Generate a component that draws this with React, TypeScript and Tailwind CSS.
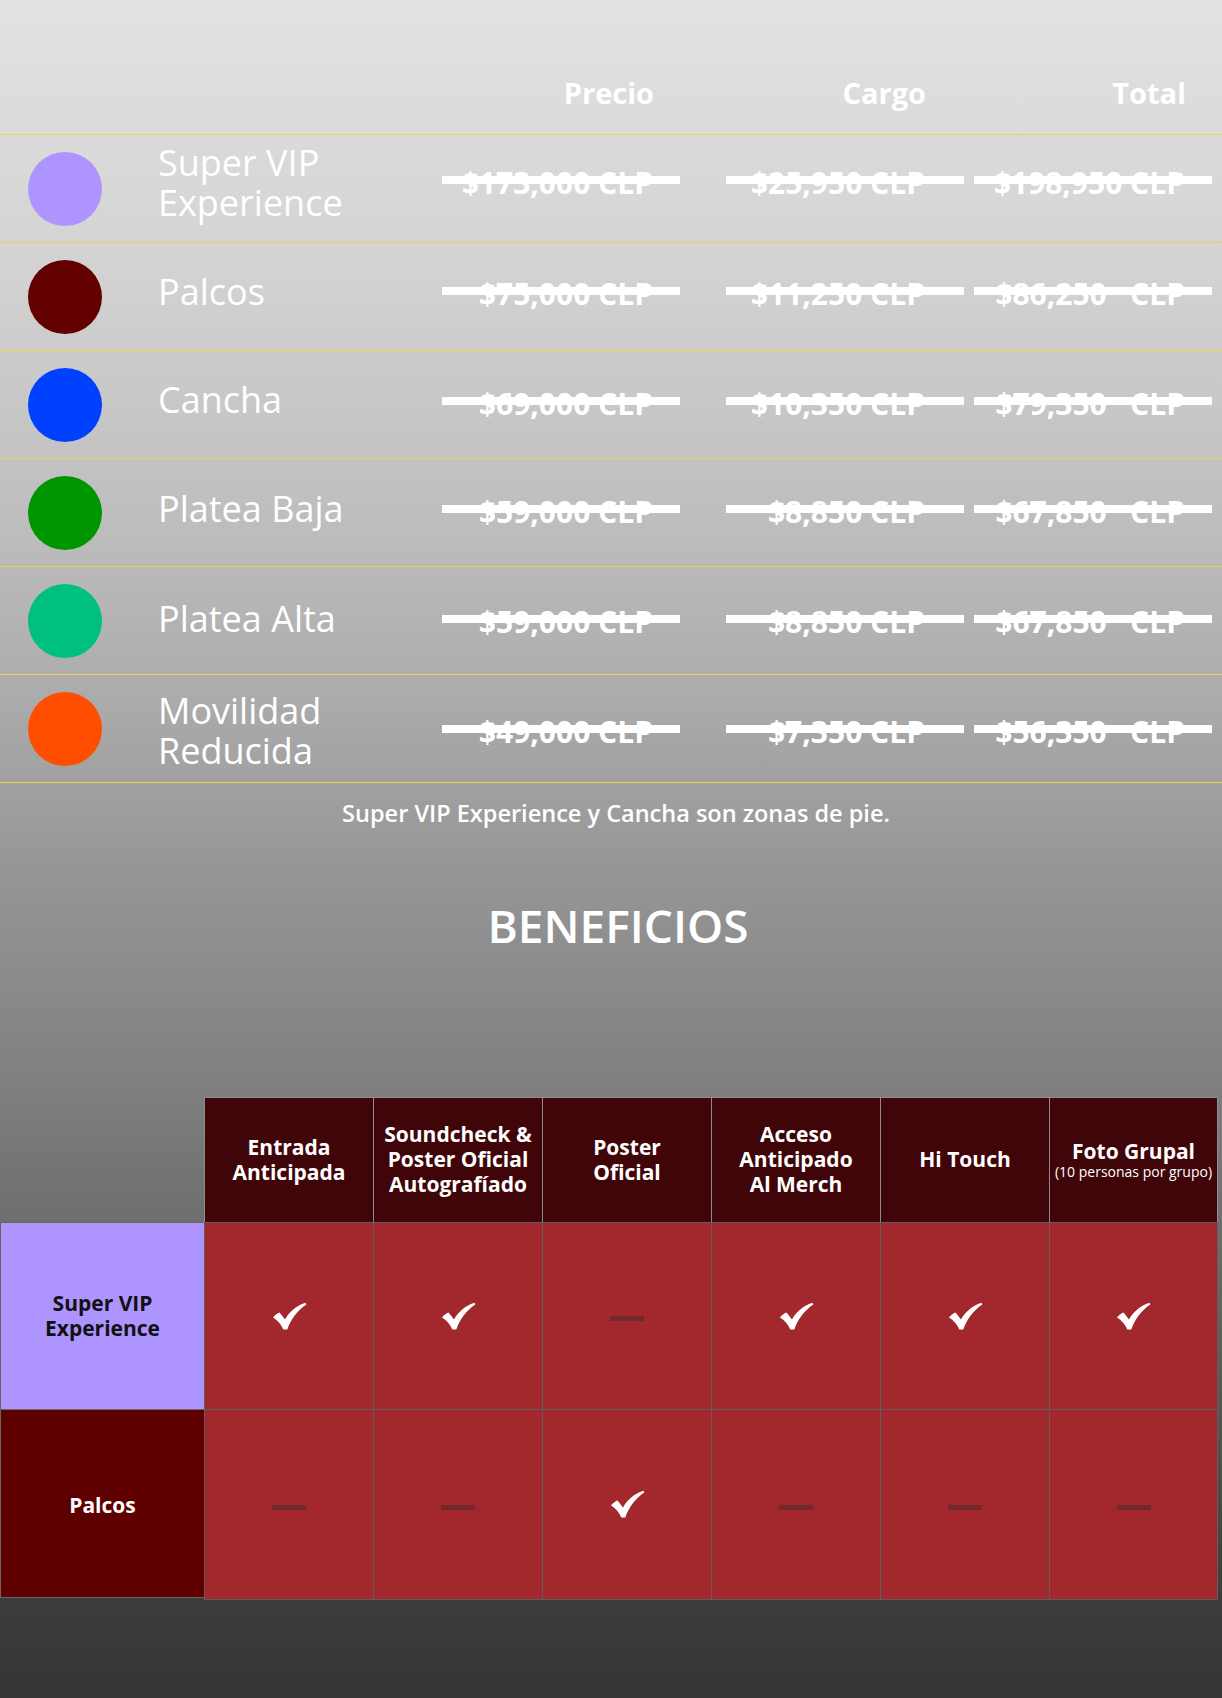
const zonas = [
  { nombre: "Super VIP Experience", color: "bg-[#ae94ff]", precio: "$173,000 CLP", cargo: "$25,950 CLP", total: "$198,950 CLP", ajNombre: "translate-y-[0px]", ajPrecio: "translate-y-[0px]" },
  { nombre: "Palcos", color: "bg-[#630000]", precio: "$75,000 CLP", cargo: "$11,250 CLP", total: "$86,250\u00a0\u00a0 CLP", ajNombre: "translate-y-[1px]", ajPrecio: "translate-y-[3px]" },
  { nombre: "Cancha", color: "bg-[#0040ff]", precio: "$69,000 CLP", cargo: "$10,350 CLP", total: "$79,350\u00a0\u00a0 CLP", ajNombre: "translate-y-[1px]", ajPrecio: "translate-y-[5px]" },
  { nombre: "Platea Baja", color: "bg-[#009600]", precio: "$59,000 CLP", cargo: "$8,850 CLP", total: "$67,850\u00a0\u00a0 CLP", ajNombre: "translate-y-[2px]", ajPrecio: "translate-y-[5px]" },
  { nombre: "Platea Alta", color: "bg-[#00c080]", precio: "$59,000 CLP", cargo: "$8,850 CLP", total: "$67,850\u00a0\u00a0 CLP", ajNombre: "translate-y-[4px]", ajPrecio: "translate-y-[7px]" },
  { nombre: "Movilidad Reducida", color: "bg-[#ff4e00]", precio: "$49,000 CLP", cargo: "$7,350 CLP", total: "$56,350\u00a0\u00a0 CLP", ajNombre: "translate-y-[8px]", ajPrecio: "translate-y-[9px]" },
];

const columnas = [
  ["Entrada", "Anticipada"],
  ["Soundcheck &", "Poster Oficial", "Autografíado"],
  ["Poster", "Oficial"],
  ["Acceso", "Anticipado", "Al Merch"],
  ["Hi Touch"],
];

const filas = [
  { nombre: ["Super VIP", "Experience"], bg: "bg-[#ae94ff]", texto: "text-[#111]", valores: [true, true, false, true, true, true] },
  { nombre: ["Palcos"], bg: "bg-[#5f0000]", texto: "text-white", valores: [false, false, true, false, false, false] },
];

function Tachado({ valor, ancho, ajuste }: { valor: string; ancho: string; ajuste: string }) {
  return (
    <div className={`relative w-[238px] pb-[12px] text-right text-[30px] font-bold leading-none ${ancho} ${ajuste}`}>
      {valor}
      <span className="absolute left-0 right-0 top-[8px] h-[8px] bg-white" />
    </div>
  );
}

function Check() {
  return (
    <svg width="35" height="28" viewBox="0 0 34 28" fill="white">
      <path d="M0.5 15.5 C2.5 13 4.5 11.5 7 10.5 L12.5 17.5 C16.5 10.5 23 4 33 0.8 L33.8 2.6 C25 8.5 18.5 17 14.8 27.5 L10.8 27.5 C8.5 22 5 18 0.5 15.5 Z" />
    </svg>
  );
}

export default function App() {
  return (
    <div className="min-h-[1698px] w-full bg-[linear-gradient(to_bottom,#e2e2e2_0px,#d4d4d4_250px,#bcbcbc_540px,#ababab_700px,#979797_860px,#7f7f7f_1090px,#6e6e6e_1220px,#3c3c3c_1600px,#353535_1698px)] font-['Open_Sans',sans-serif] text-white">
      {/* precios */}
      <div className="flex h-[135px] border-b border-[#e4d64e] pt-[78px] text-[29px] font-bold leading-none">
        <div className="w-[442px]" />
        <div className="w-[238px] pr-[26px] text-right">Precio</div>
        <div className="ml-[46px] w-[238px] pr-[38px] text-right">Cargo</div>
        <div className="ml-[10px] w-[238px] pr-[26px] text-right">Total</div>
      </div>
      {zonas.map((z) => (
        <div key={z.nombre} className="flex h-[108px] items-center border-b border-[#e4d64e]">
          <div className="w-[158px] pl-[28px]">
            <div className={`h-[74px] w-[74px] rounded-full ${z.color}`} />
          </div>
          <div className={`w-[284px] pb-[12px] pr-[20px] text-[36px] leading-[40px] ${z.ajNombre}`}>
            <div className="max-w-[250px]">{z.nombre}</div>
          </div>
          <Tachado valor={z.precio} ancho="pr-[27px]" ajuste={z.ajPrecio} />
          <div className="ml-[46px]">
            <Tachado valor={z.cargo} ancho="pr-[39px]" ajuste={z.ajPrecio} />
          </div>
          <div className="ml-[10px]">
            <Tachado valor={z.total} ancho="pr-[27px]" ajuste={z.ajPrecio} />
          </div>
        </div>
      ))}

      <p className="mt-[19px] pl-[10px] text-center text-[23.5px] font-semibold leading-none">
        Super VIP Experience y Cancha son zonas de pie.
      </p>
      <h2 className="mt-[76px] pl-[14px] text-center text-[46px] font-semibold leading-none">BENEFICIOS</h2>

      {/* beneficios */}
      <div className="mt-[149px] grid grid-cols-[204px_repeat(6,169px)] grid-rows-[125px_187px_191px]">
        <div />
        {columnas.map((c, i) => (
          <div
            key={i}
            className="flex flex-col items-center justify-center border-l border-t border-[#8c8c8c] bg-[#3f0509] px-[6px] text-center text-[21px] font-bold leading-[25px]"
          >
            {c.map((l) => (
              <span key={l}>{l}</span>
            ))}
          </div>
        ))}
        <div className="flex flex-col items-center justify-center border-x border-t border-[#8c8c8c] bg-[#3f0509] text-center">
          <span className="text-[21px] font-bold leading-[24px]">Foto Grupal</span>
          <span className="text-[14px] leading-[17px]">(10 personas por grupo)</span>
        </div>

        {filas.map((f, r) => (
          <>
            <div
              key={`l${r}`}
              className={`flex flex-col items-center justify-center border-l border-t border-[#666] text-center text-[21px] font-bold leading-[25px] ${f.bg} ${f.texto} ${r === filas.length - 1 ? "mb-[2px] border-b" : ""}`}
            >
              {f.nombre.map((n) => (
                <span key={n} className={r === 1 ? "translate-y-[2px]" : ""}>{n}</span>
              ))}
            </div>
            {f.valores.map((v, i) => (
              <div
                key={`${r}-${i}`}
                className={`flex items-center justify-center border-l border-t border-[#5e5e5e] bg-[#a3282d] ${i === 5 ? "border-r" : ""} ${r === filas.length - 1 ? "border-b" : ""}`}
              >
                {v ? <Check /> : <span className="mt-[6px] h-[5px] w-[34px] bg-[#72292c]" />}
              </div>
            ))}
          </>
        ))}
      </div>
    </div>
  );
}
